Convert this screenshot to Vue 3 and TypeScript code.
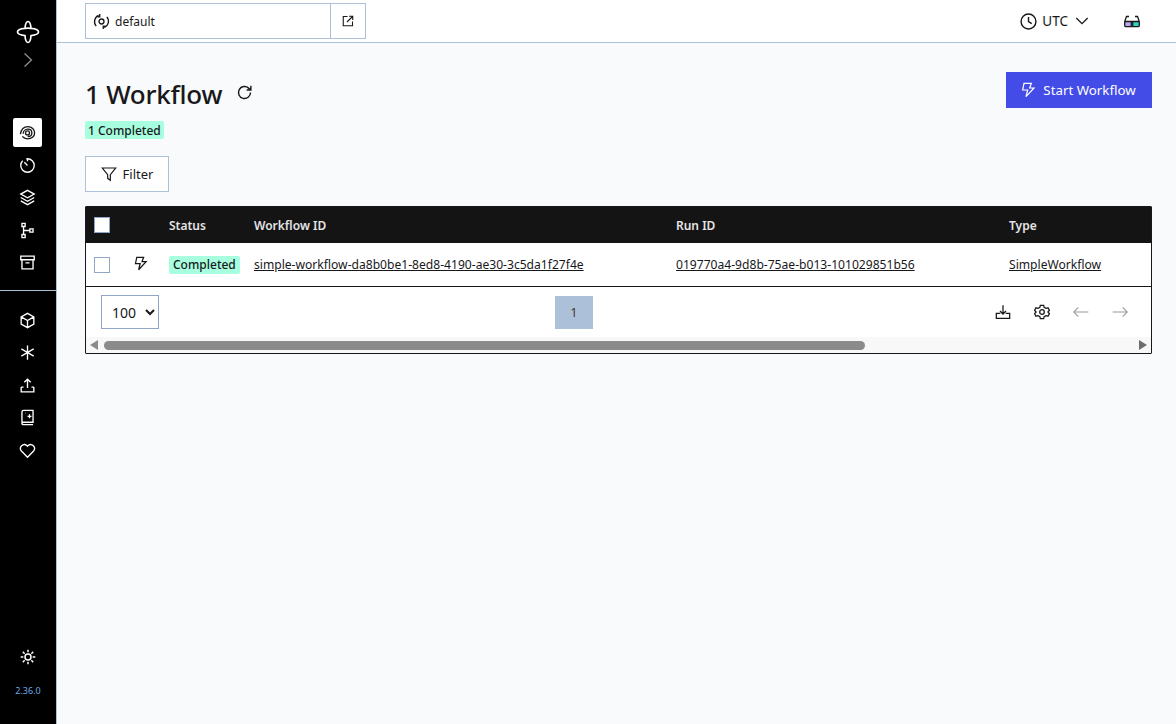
<script setup lang="ts">
const navTop: string[] = [
  'M3 14C4 8 8 4.500 12.500 4.500c5 0 8.500 3.500 8.500 8 0 4.500-4 7.500-9 7.500-3 0-5-1-6.500-3M6.500 13.500c0-3.300 2.700-5.800 6-5.800 3 0 5 2 5 4.800 0 2.800-2.400 4.500-5.300 4.500M12 10a2.500 2.500 0 1 0 0 5 2.500 2.500 0 0 0 0-5z',
  'M10.500 3.500h1.500a8.500 8.500 0 1 1-8.500 8.500c0-2.300.9-4.400 2.400-5.900M12 12 8 8M12 3.500v3',
  'M12 3 20.500 7.700 12 12.400 3.500 7.700zM3.500 12 12 16.700 20.500 12M3.500 16.300 12 21l8.500-4.700',
  'M5 3h4v4H5zM5 17h4v4H5zM15 10h4v4h-4zM7 7v10M7 12h8',
  'M3.500 4h17v4.500h-17zM5 8.500V20h14V8.500M9.500 12.500h5',
]
const navBottom: string[] = [
  'M12 3 20 7.500v9L12 21l-8-4.500v-9zM4 7.500l8 4.500 8-4.500M12 12v9',
  'M12 3v18M4.200 7.500l15.600 9M19.800 7.500l-15.600 9',
  'M12 15V4M8 8l4-4 4 4M4 14v6h16v-6M4 14h3M17 14h3',
  'M5 19V5a2 2 0 0 1 2-2h12v15H7a2 2 0 0 0-2 2 1.500 1.500 0 0 0 1.500 1H19M12 10.500h5M14.500 8v5M9 6.500h.5',
  'M12 20.500 4.300 12.700a4.900 4.900 0 0 1 6.900-6.900l.8.8.8-.8a4.900 4.900 0 0 1 6.900 6.900z',
]
const bolt = 'M6 2h11l-2.500 7H21L9 22l2.500-10H4z'
</script>

<template>
  <div class="app">
    <aside class="side">
      <svg class="logo" width="24" height="24" viewBox="0 0 24 24" fill="none" stroke="#fff" stroke-width="1.700">
        <path d="M12 1.500c-2 0-2.800 4-3 6.800C6 8.500 1.500 9.500 1.500 12s4.500 3.300 7.500 3.700c.2 2.800 1 6.800 3 6.800s2.800-4 3-6.800c3-.4 7.500-1.200 7.500-3.700s-4.500-3.500-7.500-3.700C14.800 5.500 14 1.500 12 1.500z" />
        <path d="M9 8.300c2-.2 4-.2 6 0" />
      </svg>
      <svg class="chev" width="16" height="16" viewBox="0 0 16 16" fill="none" stroke="#8d8d8d" stroke-width="1.300">
        <path d="m4.500 1.500 7 6.500-7 6.500" />
      </svg>
      <nav class="nav first">
        <div v-for="(d, i) in navTop" :key="d" class="item" :class="{ active: i === 0 }">
          <svg width="19" height="19" viewBox="0 0 24 24" fill="none" stroke="currentColor" stroke-width="1.700">
            <path :d="d" />
          </svg>
        </div>
      </nav>
      <div class="rule"></div>
      <nav class="nav">
        <div v-for="d in navBottom" :key="d" class="item">
          <svg width="19" height="19" viewBox="0 0 24 24" fill="none" stroke="currentColor" stroke-width="1.700">
            <path :d="d" />
          </svg>
        </div>
      </nav>
      <div class="side-foot">
        <svg width="16" height="16" viewBox="0 0 24 24" fill="none" stroke="#fff" stroke-width="2.200">
          <circle cx="12" cy="12" r="4.500" />
          <path d="M12 1v4M12 19v4M1 12h4M19 12h4M4.200 4.200 7 7M17 17l2.800 2.800M4.200 19.800 7 17M17 7l2.800-2.800" />
        </svg>
        <span class="version">2.36.0</span>
      </div>
    </aside>

    <div class="content">
      <header class="top">
        <div class="ns">
          <div class="ns-main">
            <svg width="17" height="17" viewBox="0 0 24 24" fill="none" stroke="#18181b" stroke-width="1.900">
              <circle cx="12" cy="12" r="3.500" />
              <path d="M8 3.500a9.500 9.500 0 0 0-3.500 15M16 20.500a9.500 9.500 0 0 0 3.500-15M9.500 1.500v4h-3M14.500 22.500v-4h3" />
            </svg>
            <span>default</span>
          </div>
          <div class="ns-link">
            <svg width="12" height="12" viewBox="0 0 24 24" fill="none" stroke="#18181b" stroke-width="2.200">
              <path d="M11 3H2.500v18.500H21V13M14 2.500h7.500V10M21.500 2.500 10 14" />
            </svg>
          </div>
        </div>
        <div class="top-right">
          <svg width="17" height="17" viewBox="0 0 24 24" fill="none" stroke="#18181b" stroke-width="2">
            <circle cx="12" cy="12" r="10.500" />
            <path d="M12 5.500V12l4.500 3" />
          </svg>
          <span class="utc">UTC</span>
          <svg width="14" height="14" viewBox="0 0 16 16" fill="none" stroke="#18181b" stroke-width="1.500">
            <path d="m1.500 4.500 6.500 6.500 6.500-6.500" />
          </svg>
          <svg class="glasses" width="16" height="14" viewBox="0 0 16 14" fill="none">
            <path d="M1 8h6v4.500H2A1 1 0 0 1 1 11.500z" fill="#b9a6f0" />
            <path d="M9 8h6v3.500a1 1 0 0 1-1 1H9z" fill="#2dd4bf" />
            <path d="M.7 12V7.500L2.500 2.500H5M15.300 12V7.500L13.500 2.500H11M.7 7.500h14.600M7.300 7.500v5.200H2a1.300 1.300 0 0 1-1.300-1.300M8.700 7.500v5.200H14a1.300 1.300 0 0 0 1.300-1.300" stroke="#18181b" stroke-width="1.300" />
          </svg>
        </div>
      </header>

      <main class="main">
        <div class="title-row">
          <div class="title-left">
            <h1>1 Workflow</h1>
            <svg class="refresh" width="17" height="17" viewBox="0 0 24 24" fill="none" stroke="#18181b" stroke-width="2">
              <path d="M20.500 12a8.500 8.500 0 1 1-2.700-6.200L21 8.500M21 2.500v6h-6" />
            </svg>
          </div>
          <button class="start">
            <svg width="16" height="16" viewBox="0 0 24 24" fill="none" stroke="#fff" stroke-width="1.800">
              <path :d="bolt" />
            </svg>
            <span>Start Workflow</span>
          </button>
        </div>
        <div class="count"><span class="badge">1 Completed</span></div>
        <button class="filter">
          <svg width="16" height="16" viewBox="0 0 24 24" fill="none" stroke="#18181b" stroke-width="1.800">
            <path d="M2 3h20l-8 10v8.500l-4-3V13z" />
          </svg>
          Filter
        </button>

        <section class="table">
          <div class="grid head">
            <div><span class="check white"></span></div>
            <div>Status</div>
            <div>Workflow ID</div>
            <div>Run ID</div>
            <div>Type</div>
          </div>
          <div class="grid row">
            <div class="check-cell">
              <span class="check"></span>
              <svg class="row-bolt" width="15" height="15" viewBox="0 0 24 24" fill="none" stroke="#18181b" stroke-width="2">
                <path :d="bolt" />
              </svg>
            </div>
            <div><span class="badge status">Completed</span></div>
            <div><a>simple-workflow-da8b0be1-8ed8-4190-ae30-3c5da1f27f4e</a></div>
            <div><a>019770a4-9d8b-75ae-b013-101029851b56</a></div>
            <div><a>SimpleWorkflow</a></div>
          </div>
          <div class="pager">
            <select class="size">
              <option>100</option>
            </select>
            <div class="page">1</div>
            <div class="tools">
              <svg width="16" height="16" viewBox="0 0 24 24" fill="none" stroke="#18181b" stroke-width="1.900">
                <path d="M12 2v13M7.500 10.500 12 15l4.500-4.500M8 14H2v7.500h20V14h-6M5.500 18.500h0" />
              </svg>
              <svg width="16" height="16" viewBox="0 0 24 24" fill="none" stroke="#18181b" stroke-width="1.900">
                <circle cx="12" cy="12" r="3.500" />
                <path d="m9.500 2-.7 3L6 6.500 3 5.700.8 9.500 3 11.500v1L.8 14.500 3 18.300l3-.8 2.800 1.500.7 3h5l.7-3 2.800-1.500 3 .8 2.200-3.800-2.200-2v-1l2.200-2L21 5.700l-3 .8L15.200 5l-.7-3z" />
              </svg>
              <svg width="16" height="16" viewBox="0 0 24 24" fill="none" stroke="#9a9a9a" stroke-width="1.600">
                <path d="M23 12H1M8 5l-7 7 7 7" />
              </svg>
              <svg width="16" height="16" viewBox="0 0 24 24" fill="none" stroke="#9a9a9a" stroke-width="1.600">
                <path d="M1 12h22M16 5l7 7-7 7" />
              </svg>
            </div>
          </div>
          <div class="bar">
            <span class="tri left"></span>
            <div class="track"><div class="thumb"></div></div>
            <span class="tri right"></span>
          </div>
        </section>
      </main>
    </div>
  </div>
</template>

<style>
html, body { margin: 0; background: #f8fafc; }
</style>

<style scoped>
.app {
  display: flex;
  height: 724px;
  overflow: hidden;
  font-family: "Noto Sans", "Open Sans", sans-serif;
  color: #18181b;
  font-size: 14px;
}
.side {
  box-sizing: border-box;
  width: 57px;
  flex: none;
  background: #000;
  border-right: 1px solid #adc0da;
  display: flex;
  flex-direction: column;
  align-items: center;
  padding-top: 20px;
  color: #fff;
}
.chev { margin-top: 8px; }
.nav { display: flex; flex-direction: column; align-items: center; width: 100%; }
.nav.first { margin-top: 50px; }
.item {
  width: 29px;
  height: 29px;
  margin: 0 1px 3.500px 0;
  border-radius: 2px;
  display: flex;
  align-items: center;
  justify-content: center;
}
.item.active { background: #fff; color: #18181b; }
.rule { align-self: stretch; height: 1px; background: #adc0da; margin: 9px 0 15px; }
.side-foot {
  margin-top: auto;
  padding-bottom: 26px;
  display: flex;
  flex-direction: column;
  align-items: center;
  gap: 19px;
}
.version { font-size: 9px; line-height: 14px; color: #6fa8e8; }
.content { flex: 1; min-width: 0; display: flex; flex-direction: column; }
.top {
  box-sizing: border-box;
  height: 43px;
  background: #fff;
  border-bottom: 1px solid #adc0da;
  display: flex;
  align-items: flex-start;
  justify-content: space-between;
  padding: 3px 36px 0 28px;
}
.ns {
  box-sizing: border-box;
  width: 281px;
  height: 36px;
  border: 1px solid #adc0da;
  display: flex;
}
.ns-main {
  flex: 1;
  display: flex;
  align-items: center;
  gap: 5px;
  padding-left: 7px;
  font-size: 12px;
}
.ns-link {
  width: 34px;
  border-left: 1px solid #adc0da;
  display: flex;
  align-items: center;
  justify-content: center;
}
.top-right { display: flex; align-items: center; height: 36px; }
.utc { margin: 0 7px 0 5px; font-size: 13.500px; }
.glasses { margin-left: 35px; }
.main { flex: 1; padding: 28px 24px 0 28px; }
.title-row { display: flex; justify-content: space-between; align-items: flex-start; }
.title-left { display: flex; align-items: center; gap: 15px; height: 45px; }
h1 { margin: 0; font-size: 26px; letter-spacing: -0.25px; line-height: 44px; font-weight: 500; }
.refresh { position: relative; top: -1px; left: -1px; }
.start {
  width: 146px;
  height: 36px;
  margin-top: 1px;
  border: 0;
  padding: 0 2px 1px 0;
  background: #444ce7;
  color: #fff;
  font: inherit;
  font-size: 13.300px;
  display: flex;
  align-items: center;
  justify-content: center;
  gap: 7px;
}
.count { margin-top: 5px; height: 18px; display: flex; }
.badge {
  display: inline-block;
  height: 18px;
  background: #a7ffdf;
  border-radius: 2px;
  padding: 0 3px;
  font-size: 12px;
  line-height: 19px;
  font-weight: 500;
  white-space: nowrap;
}
.filter {
  margin-top: 17px;
  box-sizing: border-box;
  width: 84px;
  height: 36px;
  background: #fff;
  border: 1px solid #adc0da;
  font: inherit;
  font-size: 13px;
  color: #18181b;
  display: flex;
  align-items: center;
  justify-content: center;
  gap: 6px;
}
.table {
  margin-top: 14px;
  box-sizing: border-box;
  width: 1067px;
  border: 1px solid #18181b;
  border-radius: 1px;
  background: #fff;
}
.grid {
  display: grid;
  grid-template-columns: 83px 85px 422px 333px 1fr;
  align-items: center;
}
.head {
  height: 36px;
  background: #141414;
  color: #e4e4e7;
  font-size: 12px;
  font-weight: 600;
}
.row { height: 43px; border-bottom: 1px solid #18181b; font-size: 12.100px; }
.check {
  display: block;
  box-sizing: border-box;
  width: 16px;
  height: 16px;
  margin-left: 8px;
  border: 1px solid #8fa6c8;
  background: #fff;
}
.check-cell { display: flex; align-items: center; }
.row-bolt { margin-left: 23px; position: relative; top: -1px; }
.status { font-size: 12px; line-height: 18px; padding: 0 4px; }
a { color: #18181b; text-decoration: underline; white-space: nowrap; }
.pager {
  height: 50px;
  display: grid;
  grid-template-columns: 454px 38px 1fr;
  align-items: center;
  padding: 0 23px 0 15px;
}
.size {
  box-sizing: border-box;
  width: 58px;
  height: 34px;
  border: 1px solid #8fa6c8;
  background: #fff;
  font: inherit;
  font-size: 14px;
  color: #18181b;
  padding-left: 6px;
  border-radius: 0;
}
.page {
  width: 38px;
  height: 33px;
  background: #adc0da;
  color: #4a3010;
  font-size: 12px;
  display: flex;
  align-items: center;
  justify-content: center;
}
.tools { justify-self: end; display: flex; align-items: center; gap: 23px; }
.bar {
  height: 16px;
  background: #f8f8f8;
  display: flex;
  align-items: center;
}
.track { flex: 1; padding: 0 6px; }
.thumb { width: 761px; height: 9px; background: #8b8b8b; border-radius: 5px; }
.tri { width: 0; height: 0; border-top: 5px solid transparent; border-bottom: 5px solid transparent; }
.tri.left { border-right: 8px solid #8b8b8b; margin-left: 4px; }
.tri.right { border-left: 8px solid #6d6d6d; margin-right: 4px; }
</style>
